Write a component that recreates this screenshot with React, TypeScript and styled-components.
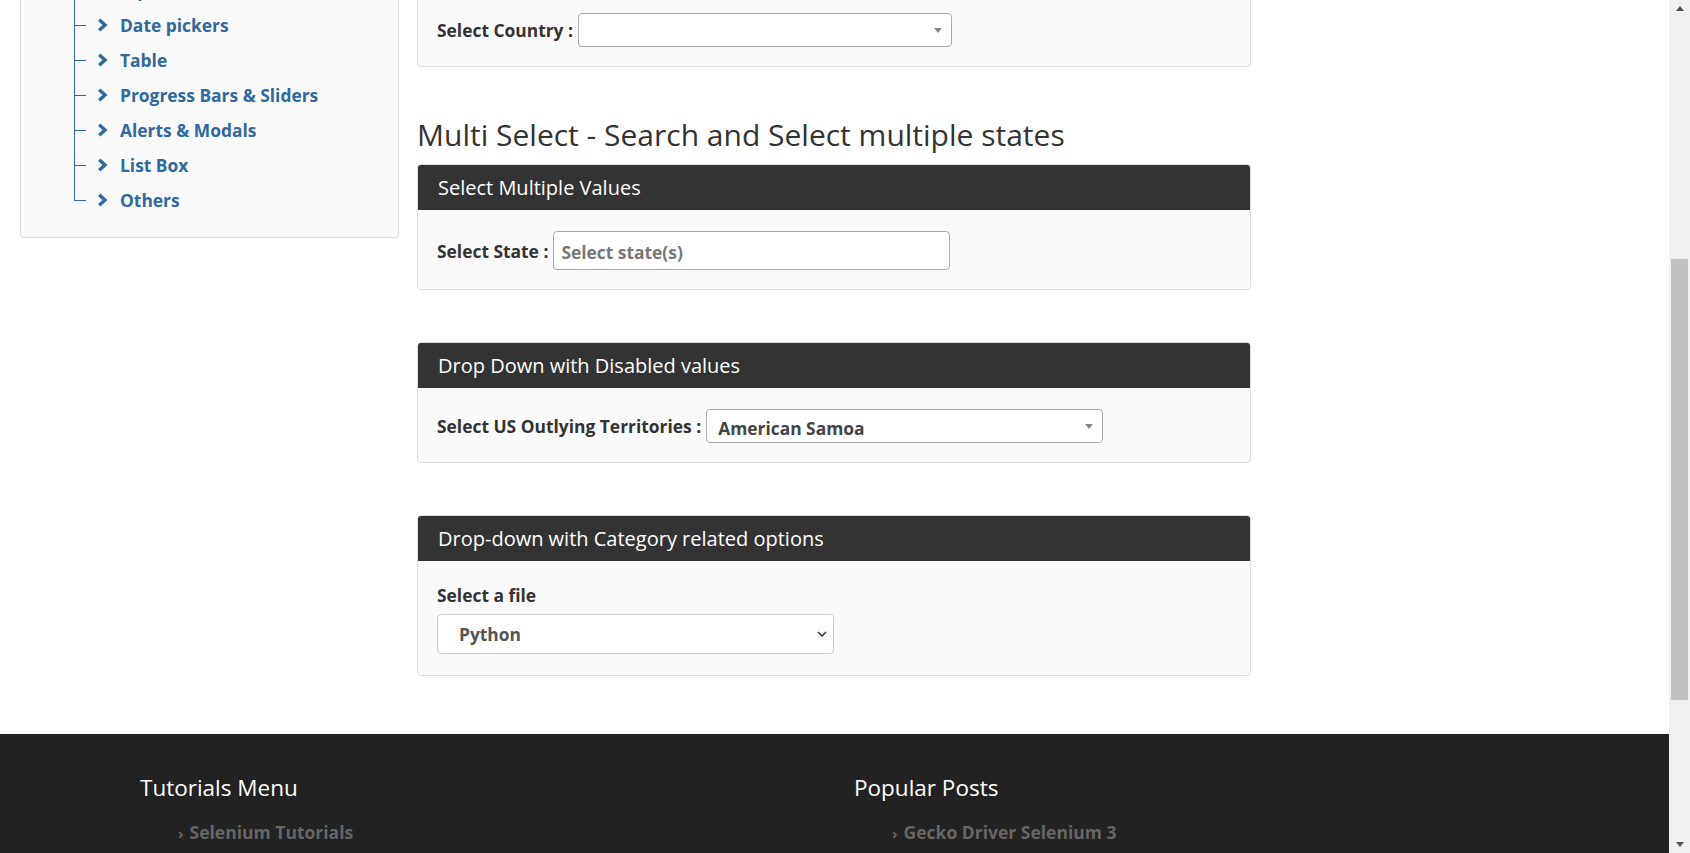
import styled, { createGlobalStyle } from 'styled-components';

const GlobalStyle = createGlobalStyle`
  html, body {
    margin: 0;
    padding: 0;
    background: #fff;
    overflow: hidden;
  }
  body {
    font-family: 'Open Sans', 'Liberation Sans', sans-serif;
    color: #333;
  }
  * {
    box-sizing: border-box;
  }
`;

const menuItems = [
  'Input Forms',
  'Date pickers',
  'Table',
  'Progress Bars & Sliders',
  'Alerts & Modals',
  'List Box',
  'Others',
];

const Chevron = () => (
  <svg width="11" height="14" viewBox="0 0 11 14">
    <path d="M2.2 1.8 L8 7 L2.2 12.2" fill="none" stroke="currentColor" strokeWidth="3.4" strokeLinejoin="miter" />
  </svg>
);

const SelectChevron = () => (
  <svg width="10" height="6" viewBox="0 0 10 6">
    <path d="M1 1 L5 5 L9 1" fill="none" stroke="#333" strokeWidth="1.5" />
  </svg>
);

const App = () => {
  return (
    <>
      <GlobalStyle />
      <Page>
        <Viewport>
          <Content>
            <Sidebar>
              <Tree>
                {menuItems.map((item) => (
                  <TreeItem key={item}>
                    <ChevronWrap>
                      <Chevron />
                    </ChevronWrap>
                    {item}
                  </TreeItem>
                ))}
              </Tree>
            </Sidebar>

            <Main>
              <CutPanel>
                <InlineField>
                  <FieldLabel>Select Country :</FieldLabel>
                  <Select2Box $width={374} $height={34}>
                    <Select2Arrow />
                  </Select2Box>
                </InlineField>
              </CutPanel>

              <SectionTitle>Multi Select - Search and Select multiple states</SectionTitle>

              <Panel>
                <PanelHeader>Select Multiple Values</PanelHeader>
                <PanelBody $top={21} $bottom={19}>
                  <InlineField>
                    <FieldLabel>Select State :</FieldLabel>
                    <Select2Box $width={397} $height={39}>
                      <Placeholder>Select state(s)</Placeholder>
                    </Select2Box>
                  </InlineField>
                </PanelBody>
              </Panel>

              <Panel>
                <PanelHeader>Drop Down with Disabled values</PanelHeader>
                <PanelBody $top={21} $bottom={19}>
                  <InlineField>
                    <FieldLabel>Select US Outlying Territories :</FieldLabel>
                    <Select2Box $width={397} $height={34}>
                      <SelectedValue>American Samoa</SelectedValue>
                      <Select2Arrow />
                    </Select2Box>
                  </InlineField>
                </PanelBody>
              </Panel>

              <Panel>
                <PanelHeader>Drop-down with Category related options</PanelHeader>
                <PanelBody $top={22} $bottom={21}>
                  <StackLabel>Select a file</StackLabel>
                  <NativeSelectWrap>
                    <NativeSelect defaultValue="python">
                      <option value="python">Python</option>
                    </NativeSelect>
                    <NativeChevron>
                      <SelectChevron />
                    </NativeChevron>
                  </NativeSelectWrap>
                </PanelBody>
              </Panel>
            </Main>
          </Content>

          <Footer>
            <FooterColumn>
              <FooterTitle>Tutorials Menu</FooterTitle>
              <FooterList>
                <FooterLink>
                  <Arrow>›</Arrow>Selenium Tutorials
                </FooterLink>
              </FooterList>
            </FooterColumn>
            <FooterColumn>
              <FooterTitle>Popular Posts</FooterTitle>
              <FooterList>
                <FooterLink>
                  <Arrow>›</Arrow>Gecko Driver Selenium 3
                </FooterLink>
              </FooterList>
            </FooterColumn>
          </Footer>
        </Viewport>

        <Scrollbar>
          <ScrollButton>
            <ArrowUp />
          </ScrollButton>
          <ScrollTrack>
            <ScrollThumb />
          </ScrollTrack>
          <ScrollButton>
            <ArrowDown />
          </ScrollButton>
        </Scrollbar>
      </Page>
    </>
  );
};

export default App;

const Page = styled.div`
  display: flex;
  width: 1690px;
  height: 853px;
  overflow: hidden;
`;

const Viewport = styled.div`
  flex: 1;
  display: flex;
  flex-direction: column;
  overflow: hidden;
`;

const Content = styled.div`
  display: flex;
  align-items: flex-start;
  gap: 18px;
  padding-left: 20px;
`;

const Sidebar = styled.div`
  width: 379px;
  padding-bottom: 20px;
  background: #fafafa;
  border: 1px solid #ddd;
  border-top: none;
  border-radius: 0 0 4px 4px;
`;

const Tree = styled.ul`
  list-style: none;
  margin: -28px 0 0 53px;
  padding: 0;
`;

const TreeItem = styled.li`
  position: relative;
  display: flex;
  align-items: center;
  height: 35px;
  padding-left: 23px;
  font-size: 17.4px;
  font-weight: 700;
  color: #30689f;

  &::before {
    content: '';
    position: absolute;
    left: 0;
    top: 0;
    bottom: 0;
    width: 1px;
    background: #30689f;
  }

  &:last-child::before {
    bottom: 50%;
  }

  &::after {
    content: '';
    position: absolute;
    left: 0;
    top: 50%;
    width: 12px;
    height: 1px;
    background: #30689f;
  }
`;

const ChevronWrap = styled.span`
  display: flex;
  margin-right: 12px;
`;

const Main = styled.div`
  width: 834px;
  display: flex;
  flex-direction: column;
`;

const Panel = styled.div`
  background: #fafafa;
  border: 1px solid #ddd;
  border-radius: 4px;
  margin-bottom: 52px;

  &:last-child {
    margin-bottom: 58px;
  }
`;

const CutPanel = styled.div`
  background: #fafafa;
  border: 1px solid #ddd;
  border-top: none;
  border-radius: 0 0 4px 4px;
  padding: 13px 19px 19px;
`;

const PanelHeader = styled.div`
  background: #333;
  color: #fff;
  font-size: 20px;
  line-height: 26px;
  padding: 10px 20px 9px;
  border-radius: 3px 3px 0 0;
`;

const PanelBody = styled.div<{ $top: number; $bottom: number }>`
  padding: ${(p) => p.$top}px 19px ${(p) => p.$bottom}px;
`;

const SectionTitle = styled.h3`
  margin: 51px 0 13px;
  font-size: 30px;
  font-weight: 400;
  line-height: 33px;
  color: #333;
`;

const InlineField = styled.div`
  display: flex;
  align-items: center;
  gap: 5px;
`;

const FieldLabel = styled.label`
  font-size: 17.4px;
  font-weight: 700;
  color: #333;
  line-height: 24px;
`;

const StackLabel = styled.label`
  display: block;
  font-size: 17.4px;
  font-weight: 700;
  color: #333;
  line-height: 25px;
  margin: 0 0 6px;
`;

const Select2Box = styled.div<{ $width: number; $height: number }>`
  position: relative;
  display: flex;
  align-items: center;
  width: ${(p) => p.$width}px;
  height: ${(p) => p.$height}px;
  padding-left: 7px;
  background: #fff;
  border: 1px solid #aaa;
  border-radius: 4px;
`;

const Select2Arrow = styled.span`
  position: absolute;
  right: 9px;
  top: 50%;
  margin-top: -2px;
  width: 0;
  height: 0;
  border-left: 4px solid transparent;
  border-right: 4px solid transparent;
  border-top: 5px solid #888;
`;

const Placeholder = styled.span`
  font-size: 17.4px;
  font-weight: 700;
  color: #777;
  margin-top: 2px;
`;

const SelectedValue = styled.span`
  font-size: 17.4px;
  font-weight: 700;
  color: #444;
  padding-left: 4px;
  margin-top: 4px;
`;

const NativeSelectWrap = styled.div`
  position: relative;
  width: 397px;
`;

const NativeSelect = styled.select`
  appearance: none;
  width: 100%;
  height: 40px;
  padding: 0 0 0 21px;
  font-family: 'Open Sans', 'Liberation Sans', sans-serif;
  font-size: 17.4px;
  font-weight: 700;
  color: #555;
  background: #fff;
  border: 1px solid #ccc;
  border-radius: 4px;
  outline: none;
`;

const NativeChevron = styled.span`
  position: absolute;
  right: 7px;
  top: 17px;
  display: flex;
  pointer-events: none;
`;

const Footer = styled.footer`
  flex: 1;
  display: grid;
  grid-template-columns: 714px 714px;
  padding: 41px 0 0 140px;
  background: #222;
`;

const FooterColumn = styled.div`
  display: flex;
  flex-direction: column;
`;

const FooterTitle = styled.h4`
  margin: 0 0 19px;
  font-size: 22.5px;
  font-weight: 400;
  line-height: 26px;
  color: #fff;
`;

const FooterList = styled.ul`
  list-style: none;
  margin: 0;
  padding: 0 0 0 38px;
`;

const FooterLink = styled.li`
  display: flex;
  align-items: baseline;
  font-size: 17.5px;
  font-weight: 700;
  line-height: 24px;
  color: #666;
`;

const Arrow = styled.span`
  font-size: 15px;
  margin-right: 6px;
`;

const Scrollbar = styled.div`
  width: 21px;
  display: flex;
  flex-direction: column;
  background: #f0f0f0;
`;

const ScrollButton = styled.div`
  height: 17px;
  display: flex;
  align-items: center;
  justify-content: center;
`;

const ArrowUp = styled.span`
  width: 0;
  height: 0;
  border-left: 4.5px solid transparent;
  border-right: 4.5px solid transparent;
  border-bottom: 5px solid #505050;
`;

const ArrowDown = styled.span`
  width: 0;
  height: 0;
  border-left: 4.5px solid transparent;
  border-right: 4.5px solid transparent;
  border-top: 5px solid #505050;
`;

const ScrollTrack = styled.div`
  flex: 1;
  display: flex;
  flex-direction: column;
`;

const ScrollThumb = styled.div`
  height: 441px;
  margin: 242px 2px 0;
  background: #c1c1c1;
`;
